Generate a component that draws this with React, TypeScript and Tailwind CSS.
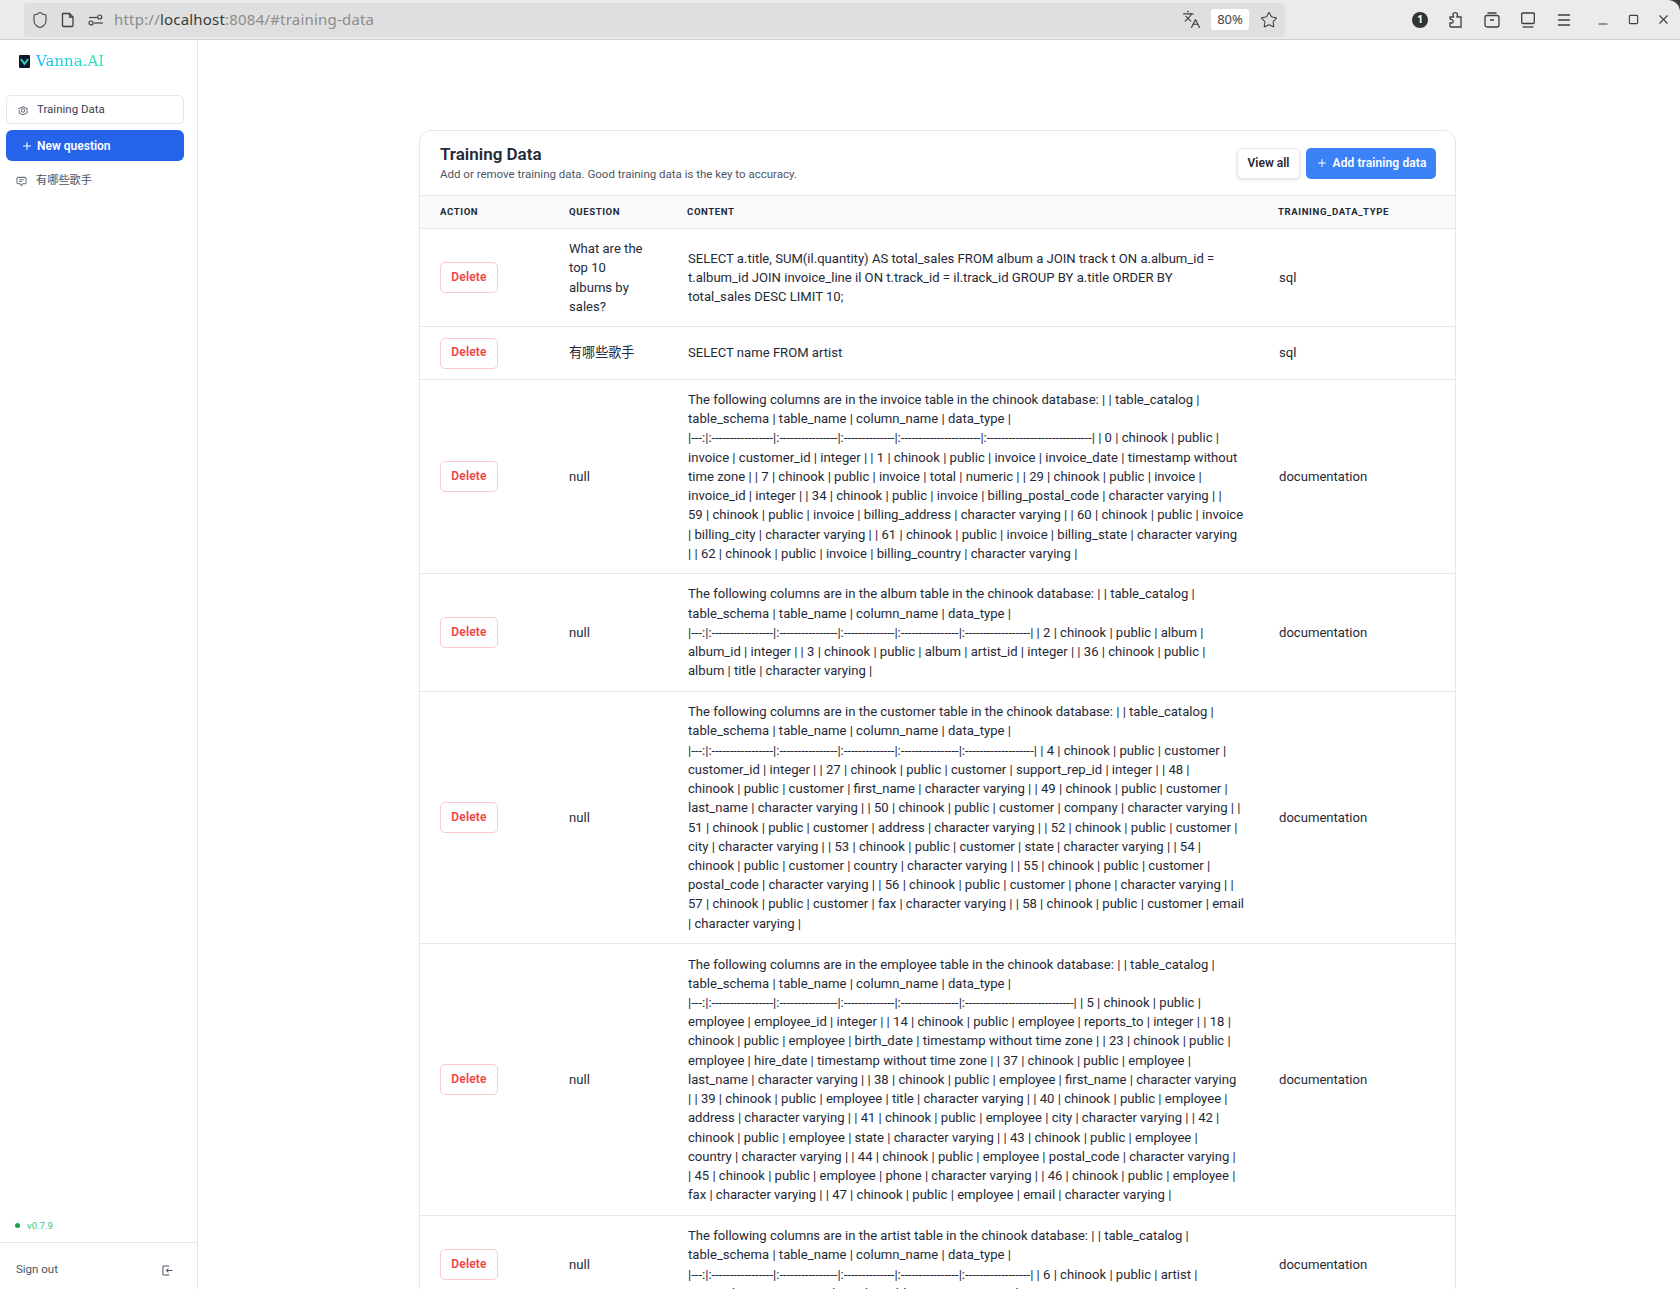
import { Languages, Minus, Plus, Shield, Square, Star, X } from "lucide-react";

const sans = "font-['Roboto','Noto_Sans_CJK_SC',sans-serif]";

const rows = [
  {
    height: "h-[98px]",
    question: "What are the\ntop 10\nalbums by\nsales?",
    content:
      "SELECT a.title, SUM(il.quantity) AS total_sales FROM album a JOIN track t ON a.album_id =\nt.album_id JOIN invoice_line il ON t.track_id = il.track_id GROUP BY a.title ORDER BY\ntotal_sales DESC LIMIT 10;",
    type: "sql",
  },
  { height: "h-[53px]", question: "有哪些歌手", content: "SELECT name FROM artist", type: "sql" },
  {
    height: "h-[194px]",
    question: "null",
    content:
      "The following columns are in the invoice table in the chinook database: | | table_catalog |\ntable_schema | table_name | column_name | data_type |\n|---:|:-----------------|:----------------|:--------------|:----------------------|:-----------------------------| | 0 | chinook | public |\ninvoice | customer_id | integer | | 1 | chinook | public | invoice | invoice_date | timestamp without\ntime zone | | 7 | chinook | public | invoice | total | numeric | | 29 | chinook | public | invoice |\ninvoice_id | integer | | 34 | chinook | public | invoice | billing_postal_code | character varying | |\n59 | chinook | public | invoice | billing_address | character varying | | 60 | chinook | public | invoice\n| billing_city | character varying | | 61 | chinook | public | invoice | billing_state | character varying\n| | 62 | chinook | public | invoice | billing_country | character varying |",
    type: "documentation",
  },
  {
    height: "h-[118px]",
    question: "null",
    content:
      "The following columns are in the album table in the chinook database: | | table_catalog |\ntable_schema | table_name | column_name | data_type |\n|---:|:-----------------|:----------------|:--------------|:----------------|:------------------| | 2 | chinook | public | album |\nalbum_id | integer | | 3 | chinook | public | album | artist_id | integer | | 36 | chinook | public |\nalbum | title | character varying |",
    type: "documentation",
  },
  {
    height: "h-[252px]",
    question: "null",
    content:
      "The following columns are in the customer table in the chinook database: | | table_catalog |\ntable_schema | table_name | column_name | data_type |\n|---:|:-----------------|:----------------|:--------------|:----------------|:-------------------| | 4 | chinook | public | customer |\ncustomer_id | integer | | 27 | chinook | public | customer | support_rep_id | integer | | 48 |\nchinook | public | customer | first_name | character varying | | 49 | chinook | public | customer |\nlast_name | character varying | | 50 | chinook | public | customer | company | character varying | |\n51 | chinook | public | customer | address | character varying | | 52 | chinook | public | customer |\ncity | character varying | | 53 | chinook | public | customer | state | character varying | | 54 |\nchinook | public | customer | country | character varying | | 55 | chinook | public | customer |\npostal_code | character varying | | 56 | chinook | public | customer | phone | character varying | |\n57 | chinook | public | customer | fax | character varying | | 58 | chinook | public | customer | email\n| character varying |",
    type: "documentation",
  },
  {
    height: "h-[272px]",
    question: "null",
    content:
      "The following columns are in the employee table in the chinook database: | | table_catalog |\ntable_schema | table_name | column_name | data_type |\n|---:|:-----------------|:----------------|:--------------|:----------------|:------------------------------| | 5 | chinook | public |\nemployee | employee_id | integer | | 14 | chinook | public | employee | reports_to | integer | | 18 |\nchinook | public | employee | birth_date | timestamp without time zone | | 23 | chinook | public |\nemployee | hire_date | timestamp without time zone | | 37 | chinook | public | employee |\nlast_name | character varying | | 38 | chinook | public | employee | first_name | character varying\n| | 39 | chinook | public | employee | title | character varying | | 40 | chinook | public | employee |\naddress | character varying | | 41 | chinook | public | employee | city | character varying | | 42 |\nchinook | public | employee | state | character varying | | 43 | chinook | public | employee |\ncountry | character varying | | 44 | chinook | public | employee | postal_code | character varying |\n| 45 | chinook | public | employee | phone | character varying | | 46 | chinook | public | employee |\nfax | character varying | | 47 | chinook | public | employee | email | character varying |",
    type: "documentation",
  },
  {
    height: "h-[98px]",
    question: "null",
    content:
      "The following columns are in the artist table in the chinook database: | | table_catalog |\ntable_schema | table_name | column_name | data_type |\n|---:|:-----------------|:----------------|:--------------|:----------------|:------------------| | 6 | chinook | public | artist |\nartist_id | integer | | 39 | chinook | public | artist | name | character varying |",
    type: "documentation",
  },
];

function BrowserBar() {
  return (
    <div className="bg-[#3a3a3a]">
      <div className="flex h-10 items-center rounded-tr-xl border-b border-[#cfcfcf] bg-[#ebebeb] pl-6 text-[#3f3f3f]">
        <div className="flex h-[34px] w-[1261px] items-center rounded-[4px] bg-[#dfdfdf]">
          <Shield className="ml-[7px] h-[18px] w-[18px]" strokeWidth={1.4} />
          <svg className="ml-[10px] h-[18px] w-[18px]" viewBox="0 0 18 18" fill="none" stroke="currentColor" strokeWidth="1.3">
            <path d="M4 2.5h6.5L14 6v8.5a1 1 0 0 1-1 1H4.5a1 1 0 0 1-1-1V3a.5.5 0 0 1 .5-.5z" />
            <path d="M10.5 2.5V6H14" />
          </svg>
          <svg className="ml-[10px] h-[18px] w-[18px]" viewBox="0 0 18 18" fill="none" stroke="currentColor" strokeWidth="1.2">
            <path d="M2 6.5h8" />
            <circle cx="12.7" cy="6" r="2" />
            <circle cx="4" cy="12" r="2" />
            <path d="M7 12h9" />
          </svg>
          <span className="ml-[9px] font-['Noto_Sans',sans-serif] text-[15px] tracking-[0.2px] text-[#8c8c8c]">
            http://<span className="text-[#3a3a3a]">localhost</span>:8084/#training-data
          </span>
          <div className="ml-auto flex items-center">
            <Languages className="h-[19px] w-[19px]" strokeWidth={1.5} />
            <span className="ml-[10px] flex h-[21px] w-[38px] items-center justify-center rounded-[3px] bg-white font-['Noto_Sans',sans-serif] text-[13px] text-[#444]">
              80%
            </span>
            <Star className="ml-[11px] mr-[7px] h-[18px] w-[18px]" strokeWidth={1.4} />
          </div>
        </div>
        <div className="ml-[117px] flex items-center">
          <span className="flex w-9 justify-center">
            <span className="flex h-4 w-4 items-center justify-center rounded-full bg-[#333] font-['Noto_Sans',sans-serif] text-[10px] font-bold text-white">1</span>
          </span>
          <span className="flex w-9 justify-center">
            <svg className="h-[18px] w-[18px]" viewBox="0 0 18 18" fill="none" stroke="currentColor" strokeWidth="1.3">
              <path d="M3 8V6h3.6c.4-.4-.6-1-.6-2.500 0-2.600 4.500-2.600 4.500 0 0 1.500-1 2.100-.6 2.500h4.100v10H4a1 1 0 0 1-1-1v-3.200c1.800.7 3.200-.2 3.200-1.500S4.800 8 3 8.700" />
            </svg>
          </span>
          <span className="flex w-9 justify-center">
            <svg className="h-[18px] w-[18px]" viewBox="0 0 18 18" fill="none" stroke="currentColor" strokeWidth="1.3">
              <rect x="2" y="4.500" width="14" height="11.500" rx="2" />
              <path d="M4.500 2h9M7 9h4" />
            </svg>
          </span>
          <span className="flex w-9 justify-center">
            <svg className="h-[18px] w-[18px]" viewBox="0 0 18 18" fill="none" stroke="currentColor" strokeWidth="1.3">
              <path d="M3.500 2h11a.8.8 0 0 1 .8.800v8.400a1.300 1.300 0 0 1-1.300 1.300H4a1.300 1.300 0 0 1-1.300-1.300V2.800A.8.8 0 0 1 3.500 2z" />
              <path d="M3.500 16h11" />
            </svg>
          </span>
          <span className="flex w-9 justify-center">
            <svg className="h-[18px] w-[18px]" viewBox="0 0 18 18" fill="none" stroke="currentColor" strokeWidth="1.3">
              <path d="M3 4h12M3 9h12M3 14h12" />
            </svg>
          </span>
        </div>
        <div className="ml-[6px] flex items-center">
          <span className="flex w-[30px] justify-center">
            <Minus className="mt-[9px] h-[14px] w-[14px]" strokeWidth={1.8} />
          </span>
          <span className="flex w-[30px] justify-center">
            <Square className="h-[11px] w-[11px]" strokeWidth={2.4} />
          </span>
          <span className="flex w-[30px] justify-center">
            <X className="h-[15px] w-[15px]" strokeWidth={1.8} />
          </span>
        </div>
      </div>
    </div>
  );
}

function Sidebar() {
  return (
    <aside className="flex h-[1249px] w-[198px] shrink-0 flex-col border-r border-[#e5e7eb] bg-white">
      <div className="flex h-[55px] items-start pl-[19px] pt-[12px]">
        <div className="flex items-center">
          <svg className="h-[13px] w-[11px]" viewBox="0 0 11 13">
            <rect width="11" height="13" rx="1" fill="#0f172a" />
            <path d="M1.800 4l3.700 4.800L9.200 4" fill="none" stroke="#2dd4bf" strokeWidth="2" />
          </svg>
          <span className="ml-[6px] bg-linear-to-r from-[#16b5fb] to-[#2dee9c] bg-clip-text font-['DejaVu_Serif',serif] text-[15px] leading-[18px] text-transparent">
            Vanna.AI
          </span>
        </div>
      </div>
      <nav className={`flex flex-col pl-[6px] pr-[13px] ${sans}`}>
        <a className="flex h-[29px] items-center rounded-[5px] border border-[#e5e7eb] pl-[10px] pt-[1px] text-[11.5px] text-[#374151]">
          <svg className="h-[11px] w-[11px] text-[#6b7280]" viewBox="0 0 12 12" fill="none" stroke="currentColor" strokeWidth="1.100">
            <path d="M1 4.500L6.500 2 11 4v4.500L6.500 10.500 2.500 9V5.500" />
            <circle cx="6.500" cy="6" r="1.800" />
          </svg>
          <span className="ml-[9px]">Training Data</span>
        </a>
        <a className="mt-[6px] flex h-[31px] items-center rounded-[6px] bg-[#2563eb] pl-[15px] pt-[1px] text-[12px] font-semibold text-white">
          <Plus className="h-3 w-3" strokeWidth={2} />
          <span className="ml-[4px]">New question</span>
        </a>
        <a className="mt-[10px] flex h-[19px] items-center pl-[10px] pt-[1px] text-[11.2px] text-[#4b5563]">
          <svg className="h-[11px] w-[11px] text-[#6b7280]" viewBox="0 0 12 12" fill="none" stroke="currentColor" strokeWidth="1.100">
            <path d="M2.500 1.500h7A1.500 1.500 0 0 1 11 3v4a1.500 1.500 0 0 1-1.500 1.500H7.500L6 10.500 4.500 8.500h-2A1.500 1.500 0 0 1 1 7V3a1.500 1.500 0 0 1 1.500-1.500z" />
            <path d="M3.500 4h5M3.500 6h3" />
          </svg>
          <span className="ml-[9px]">有哪些歌手</span>
        </a>
      </nav>
      <div className={`mt-auto ${sans}`}>
        <div className="flex items-center pb-[9px] pl-[15px] text-[9.600px] text-[#34c77b]">
          <span className="h-[5px] w-[5px] rounded-full bg-[#16a34a]" />
          <span className="ml-[7px]">v0.7.9</span>
        </div>
        <div className="flex h-[47px] items-center justify-between border-t border-[#e5e7eb] pl-[16px] pr-[24px] pt-[8px] text-[11.5px] text-[#4b5563]">
          <span>Sign out</span>
          <svg className="h-[11px] w-[11px]" viewBox="0 0 12 12" fill="none" stroke="currentColor" strokeWidth="1.100">
            <path d="M8 1H2a1 1 0 0 0-1 1v8a1 1 0 0 0 1 1h6" />
            <path d="M11.500 6H5M7 4L5 6l2 2" />
          </svg>
        </div>
      </div>
    </aside>
  );
}

function Row({ height, question, content, type }: { height: string; question: string; content: string; type: string }) {
  return (
    <div className={`flex shrink-0 items-center border-t border-[#e5e7eb] text-[13.1px] leading-[19.2px] text-[#1f2937] ${height}`}>
      <div className="w-[149px] shrink-0 pl-5">
        <button className="flex h-[31px] w-[58px] items-center justify-center rounded-[5px] border border-[#fecaca] text-[12px] font-semibold tracking-[0.2px] text-[#ef4444]">
          Delete
        </button>
      </div>
      <div className="w-[118px] shrink-0 whitespace-pre">{question}</div>
      <div className="w-[591px] shrink-0 whitespace-pre pl-[1px]">{content}</div>
      <div className="pl-[1px]">{type}</div>
    </div>
  );
}

export default function App() {
  return (
    <div className={`h-[1289px] overflow-hidden bg-white ${sans}`}>
      <BrowserBar />
      <div className="flex">
        <Sidebar />
        <main className="flex-1 pl-[221px] pt-[90px]">
          <div className="w-[1037px] rounded-t-[12px] border border-[#e5e7eb] bg-white">
            <div className="flex h-[64px] items-center justify-between pl-5 pr-[19px]">
              <div>
                <h2 className="-mt-[1px] text-[17px] font-semibold leading-[20px] text-[#1f2937]">Training Data</h2>
                <p className="pt-[2px] text-[11.5px] leading-[16px] text-[#4b5563]">
                  Add or remove training data. Good training data is the key to accuracy.
                </p>
              </div>
              <div className="flex gap-[6px]">
                <button className="flex h-[31px] w-[63px] items-center justify-center rounded-[5px] border border-[#e5e7eb] bg-white text-[12px] font-semibold text-[#1f2937] shadow-sm">
                  View all
                </button>
                <button className="flex h-[31px] w-[130px] items-center justify-center rounded-[5px] bg-[#3b82f6] text-[12px] font-semibold tracking-[0.1px] text-white">
                  <Plus className="mr-[5px] h-3 w-3" strokeWidth={2} />
                  Add training data
                </button>
              </div>
            </div>
            <div className="flex h-[33px] items-center border-t border-[#e5e7eb] bg-[#f9fafb] text-[9.6px] font-bold uppercase tracking-[0.6px] text-[#1f2937]">
              <div className="w-[149px] shrink-0 pl-5">Action</div>
              <div className="w-[118px] shrink-0">Question</div>
              <div className="w-[591px] shrink-0">Content</div>
              <div>Training_data_type</div>
            </div>
            {rows.map((row, i) => (
              <Row key={i} {...row} />
            ))}
          </div>
        </main>
      </div>
    </div>
  );
}
